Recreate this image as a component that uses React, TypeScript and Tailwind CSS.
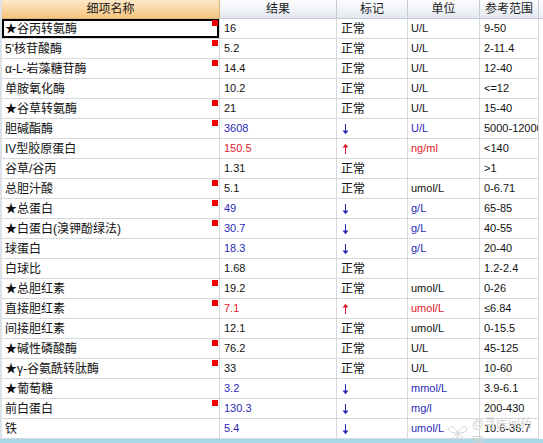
import React from "react";

type Tone = "n" | "lo" | "hi";

type Row = {
    name: string;
    mark: boolean;
    value: string;
    tone: Tone;
    unit: string;
    range: string;
};

const rows: Row[] = [
    { name: "★谷丙转氨酶", mark: true, value: "16", tone: "n", unit: "U/L", range: "9-50" },
    { name: "5'核苷酸酶", mark: true, value: "5.2", tone: "n", unit: "U/L", range: "2-11.4" },
    { name: "α-L-岩藻糖苷酶", mark: true, value: "14.4", tone: "n", unit: "U/L", range: "12-40" },
    { name: "单胺氧化酶", mark: false, value: "10.2", tone: "n", unit: "U/L", range: "<=12" },
    { name: "★谷草转氨酶", mark: true, value: "21", tone: "n", unit: "U/L", range: "15-40" },
    { name: "胆碱酯酶", mark: true, value: "3608", tone: "lo", unit: "U/L", range: "5000-12000" },
    { name: "IV型胶原蛋白", mark: false, value: "150.5", tone: "hi", unit: "ng/ml", range: "<140" },
    { name: "谷草/谷丙", mark: false, value: "1.31", tone: "n", unit: "", range: ">1" },
    { name: "总胆汁酸", mark: true, value: "5.1", tone: "n", unit: "umol/L", range: "0-6.71" },
    { name: "★总蛋白", mark: true, value: "49", tone: "lo", unit: "g/L", range: "65-85" },
    { name: "★白蛋白(溴钾酚绿法)", mark: true, value: "30.7", tone: "lo", unit: "g/L", range: "40-55" },
    { name: "球蛋白", mark: false, value: "18.3", tone: "lo", unit: "g/L", range: "20-40" },
    { name: "白球比", mark: false, value: "1.68", tone: "n", unit: "", range: "1.2-2.4" },
    { name: "★总胆红素", mark: true, value: "19.2", tone: "n", unit: "umol/L", range: "0-26" },
    { name: "直接胆红素", mark: true, value: "7.1", tone: "hi", unit: "umol/L", range: "≤6.84" },
    { name: "间接胆红素", mark: false, value: "12.1", tone: "n", unit: "umol/L", range: "0-15.5" },
    { name: "★碱性磷酸酶", mark: true, value: "76.2", tone: "n", unit: "U/L", range: "45-125" },
    { name: "★γ-谷氨酰转肽酶", mark: true, value: "33", tone: "n", unit: "U/L", range: "10-60" },
    { name: "★葡萄糖", mark: false, value: "3.2", tone: "lo", unit: "mmol/L", range: "3.9-6.1" },
    { name: "前白蛋白", mark: true, value: "130.3", tone: "lo", unit: "mg/l", range: "200-430" },
    { name: "铁", mark: false, value: "5.4", tone: "lo", unit: "umol/L", range: "10.6-36.7" },
];

const font = { fontFamily: '"Liberation Sans", "Noto Sans CJK SC", sans-serif' };

function toneText(tone: Tone) {
    if (tone === "lo") return "text-[#2a2ab8]";
    if (tone === "hi") return "text-[#e0182e]";
    return "text-[#111]";
}

function Arrow({ up }: { up: boolean }) {
    const color = up ? "#e0182e" : "#2a2ab8";
    return (
        <svg width="7" height="12" viewBox="0 0 7 12" className="block">
            {up ? (
                <>
                    <line x1="3.5" y1="2" x2="3.5" y2="11" stroke={color} strokeWidth="1" />
                    <path d="M0.5 4.5 L3.5 0.8 L6.5 4.5 Z" fill={color} />
                </>
            ) : (
                <>
                    <line x1="3.5" y1="1" x2="3.5" y2="10" stroke={color} strokeWidth="1" />
                    <path d="M0.5 7.5 L3.5 11.2 L6.5 7.5 Z" fill={color} />
                </>
            )}
        </svg>
    );
}

const cell = "h-[20px] border-r border-b border-[#d5d8dd] flex items-center overflow-hidden whitespace-nowrap";
const head =
    "h-[19px] border-r border-b border-[#c5cbd3] flex items-center justify-center text-[12px] text-[#1b1b1b] bg-gradient-to-b from-[#fdfdfe] to-[#e3e8ef]";

export default function App() {
    return (
        <div className="relative w-[543px] h-[443px] bg-white overflow-hidden" style={font}>
            <div className="grid grid-cols-[218px_117px_71px_72px_59px_6px] border-l-2 border-[#dde2e8]">
                {/* header */}
                <div className="h-[19px] border-r border-b border-[#d9b47e] flex items-center justify-center text-[12px] text-[#1b1b1b] bg-gradient-to-b from-[#fde8c8] to-[#f6c47e]">
                    细项名称
                </div>
                <div className={head}>结果</div>
                <div className={head}>标记</div>
                <div className={head}>单位</div>
                <div className={head}>参考范围</div>
                <div className="h-[19px] border-b border-[#c5cbd3] bg-gradient-to-b from-[#fdfdfe] to-[#e9edf2]" />

                {rows.map((r, i) => (
                    <React.Fragment key={i}>
                        <div
                            className={`${cell} relative pl-[3px] text-[12px] text-[#111] ${
                                i === 0 ? "shadow-[inset_0_0_0_2px_#000]" : ""
                            }`}
                        >
                            {r.name}
                            {r.mark && <span className="absolute right-px top-px w-[6px] h-[6px] bg-[#f00000]" />}
                        </div>
                        <div className={`${cell} pl-[4px] text-[11px] ${toneText(r.tone)}`}>{r.value}</div>
                        <div className={`${cell} pl-[4px] text-[12px] text-[#111]`}>
                            {r.tone === "n" ? "正常" : <span className="pl-[1px]"><Arrow up={r.tone === "hi"} /></span>}
                        </div>
                        <div className={`${cell} pl-[3px] text-[11px] ${toneText(r.tone)}`}>{r.unit}</div>
                        <div className={`${cell} pl-[4px] text-[11px] text-[#111]`}>{r.range}</div>
                        <div className="h-[20px]" />
                    </React.Fragment>
                ))}
            </div>
            <div className="h-[4px] bg-[#a9d8e6]" />

            {/* faint watermark */}
            <div className="absolute left-[447px] top-[415px] flex items-center gap-[3px] text-[12px] text-[#d2d2d2] pointer-events-none">
                <svg width="22" height="20" viewBox="0 0 22 20" fill="none" stroke="#d4d4d4" strokeWidth="1">
                    <path d="M11 10 C 7 2, 1 2, 2 7 C 3 10, 8 10, 11 10 Z" />
                    <path d="M11 10 C 15 2, 21 2, 20 7 C 19 10, 14 10, 11 10 Z" />
                    <path d="M11 10 C 7 12, 4 17, 7 18 C 9 18, 10 14, 11 10 Z" />
                    <path d="M11 10 C 15 12, 18 17, 15 18 C 13 18, 12 14, 11 10 Z" />
                </svg>
                <span>@寻医问药网</span>
            </div>
        </div>
    );
}
